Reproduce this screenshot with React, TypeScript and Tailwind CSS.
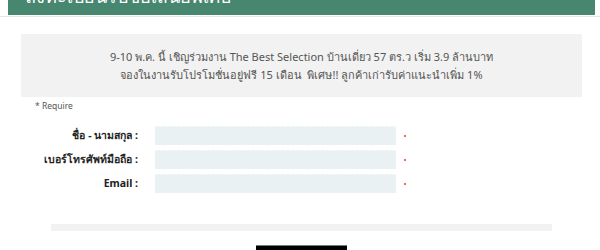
const fields = [
  { label: "ชื่อ - นามสกุล :" },
  { label: "เบอร์โทรศัพท์มือถือ :" },
  { label: "Email :" },
];

export default function App() {
  return (
    <div
      className="relative h-[250px] w-[600px] overflow-hidden bg-white"
      style={{ fontFamily: '"Noto Sans", "Open Sans", sans-serif' }}
    >
      <div className="ml-2 flex h-[15px] w-[587px] items-end overflow-hidden bg-[#47866f] pl-[17px]">
        <h1 className="mb-[10px] whitespace-nowrap text-[18px] font-light leading-none text-white">
          ลงทะเบียนรับข้อเสนอพิเศษ
        </h1>
      </div>
      <div className="mt-px h-px w-full bg-[#e6e6e6]" />

      <div className="ml-[21px] mt-[17px] flex h-[63px] w-[561px] flex-col items-center justify-center bg-[#f2f2f2] text-[11px] leading-[18px] text-[#555]">
        <p>9-10 พ.ค. นี้ เชิญร่วมงาน The Best Selection บ้านเดี่ยว 57 ตร.ว เริ่ม 3.9 ล้านบาท</p>
        <p>จองในงานรับโปรโมชั่นอยู่ฟรี 15 เดือน&nbsp; พิเศษ!! ลูกค้าเก่ารับค่าแนะนำเพิ่ม 1%</p>
      </div>

      <p className="ml-[35px] mt-[3px] text-[8.5px] leading-[12px] text-[#555]">* Require</p>

      <div className="mt-[14px] flex flex-col gap-[5px]">
        {fields.map((f) => (
          <div key={f.label} className="flex items-center">
            <label className="w-[138px] text-right text-[10.5px] font-bold text-[#222]">{f.label}</label>
            <div className="ml-[17px] h-[19px] w-[241px] border-t border-dashed border-[#f4f8f9] bg-[#eaf1f3]" />
            <span className="ml-[8px] h-[2px] w-[2px] bg-[#f36a55]" />
          </div>
        ))}
      </div>

      <div className="ml-[51px] mt-[31px] h-[7px] w-[501px] bg-[#f2f2f2]" />

      <div className="mt-[14px] flex">
        <button className="ml-[256px] h-[20px] w-[91px] border-t border-[#777] bg-black" />
      </div>
    </div>
  );
}
